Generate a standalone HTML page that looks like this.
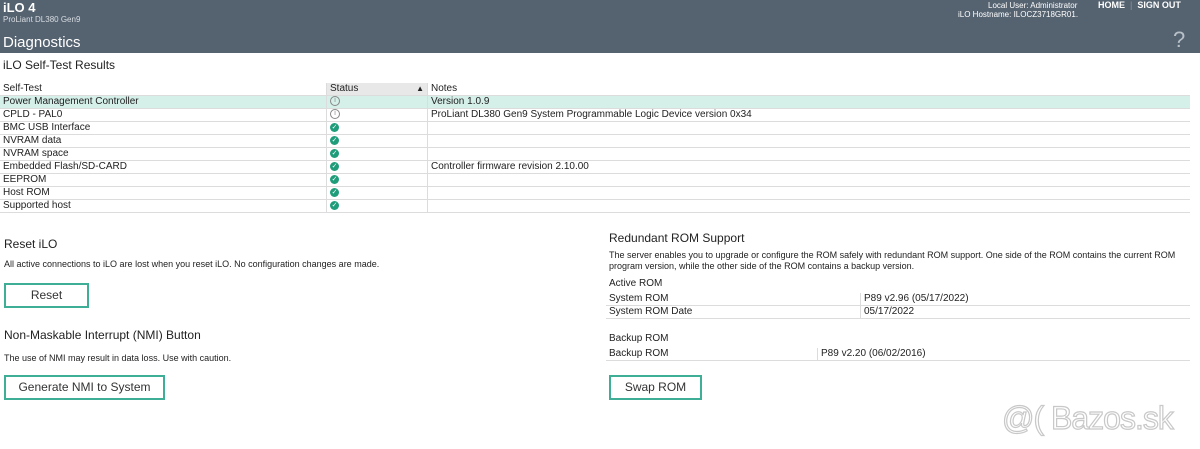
<!DOCTYPE html>
<html><head><style>
body{margin:0;width:1200px;height:449px;background:#fff;font-family:"Liberation Sans",Arial,sans-serif;color:#222;position:relative;overflow:hidden}
.a{position:absolute;white-space:nowrap}
.hdr{position:absolute;left:0;top:0;width:1200px;height:53px;background:#556270}
.t{font-size:10px}
table{border-collapse:collapse;position:absolute;font-size:10px}
td{padding:0 3px;height:12px;border-bottom:1px solid #dcdcdc;line-height:12px}
table td+td{border-left:1px solid #dcdcdc}
.btn{position:absolute;border:2px solid #3fae97;font-size:12px;text-align:center;color:#333;box-sizing:border-box}
.ok{display:inline-block;width:9px;height:9px;border-radius:50%;background:#1f9d7a;color:#fff;font-size:7px;line-height:9px;text-align:center;vertical-align:middle}
.in{display:inline-block;width:8px;height:8px;border-radius:50%;border:1px solid #888;color:#888;font-size:7px;line-height:8px;text-align:center;vertical-align:middle}
</style></head><body>
<div class="hdr"></div>
<div class="a" style="left:3px;top:0;color:#fff;font-weight:bold;font-size:13px">iLO 4</div>
<div class="a" style="left:3px;top:15px;color:#d8dde2;font-size:8px">ProLiant DL380 Gen9</div>
<div class="a" style="left:3px;top:34px;color:#fff;font-size:15px">Diagnostics</div>
<div class="a" style="left:988px;top:1px;color:#fff;font-size:8px">Local User: Administrator</div>
<div class="a" style="left:958px;top:10px;color:#fff;font-size:8px">iLO Hostname: ILOCZ3718GR01.</div>
<div class="a" style="left:1098px;top:0;color:#fff;font-size:9px;font-weight:bold">HOME &nbsp;<span style="color:#8a96a2;font-weight:normal">|</span>&nbsp; SIGN OUT</div>
<div class="a" style="left:1173px;top:27px;color:#b8c0c8;font-size:22px">?</div>
<div class="a" style="left:3px;top:58px;font-size:12px">iLO Self-Test Results</div>
<table style="left:0;top:83px;width:1190px">
<tr><td style="width:320px">Self-Test</td><td style="width:94px;background:#e8e8e8">Status<span style="float:right;font-size:8px">▲</span></td><td>Notes</td></tr>
<tr style="background:#d5efe9"><td>Power Management Controller</td><td><span class="in">i</span></td><td>Version 1.0.9</td></tr>
<tr><td>CPLD - PAL0</td><td><span class="in">i</span></td><td>ProLiant DL380 Gen9 System Programmable Logic Device version 0x34</td></tr>
<tr><td>BMC USB Interface</td><td><span class="ok">✓</span></td><td></td></tr>
<tr><td>NVRAM data</td><td><span class="ok">✓</span></td><td></td></tr>
<tr><td>NVRAM space</td><td><span class="ok">✓</span></td><td></td></tr>
<tr><td>Embedded Flash/SD-CARD</td><td><span class="ok">✓</span></td><td>Controller firmware revision 2.10.00</td></tr>
<tr><td>EEPROM</td><td><span class="ok">✓</span></td><td></td></tr>
<tr><td>Host ROM</td><td><span class="ok">✓</span></td><td></td></tr>
<tr><td>Supported host</td><td><span class="ok">✓</span></td><td></td></tr>
</table>
<div class="a" style="left:4px;top:237px;font-size:12px">Reset iLO</div>
<div class="a t" style="left:4px;top:259px;font-size:9px">All active connections to iLO are lost when you reset iLO. No configuration changes are made.</div>
<div class="btn" style="left:4px;top:283px;width:85px;height:25px;line-height:21px">Reset</div>
<div class="a" style="left:4px;top:328px;font-size:12px">Non-Maskable Interrupt (NMI) Button</div>
<div class="a t" style="left:4px;top:353px;font-size:9px">The use of NMI may result in data loss. Use with caution.</div>
<div class="btn" style="left:4px;top:375px;width:161px;height:25px;line-height:21px">Generate NMI to System</div>
<div class="a" style="left:609px;top:231px;font-size:12px">Redundant ROM Support</div>
<div class="a" style="left:609px;top:250px;font-size:9px;line-height:11px">The server enables you to upgrade or configure the ROM safely with redundant ROM support. One side of the ROM contains the current ROM<br>program version, while the other side of the ROM contains a backup version.</div>
<div class="a t" style="left:609px;top:278px">Active ROM</div>
<table style="left:606px;top:293px;width:584px"><tr><td style="width:248px">System ROM</td><td>P89 v2.96 (05/17/2022)</td></tr><tr><td>System ROM Date</td><td>05/17/2022</td></tr></table>
<div class="a t" style="left:609px;top:333px">Backup ROM</div>
<table style="left:606px;top:348px;width:584px"><tr><td style="width:205px">Backup ROM</td><td>P89 v2.20 (06/02/2016)</td></tr></table>
<div class="btn" style="left:609px;top:375px;width:93px;height:25px;line-height:21px">Swap ROM</div>
<div class="a" style="left:1002px;top:400px;font-size:32px;letter-spacing:-1px;color:#fff;-webkit-text-stroke:1.2px #c8c8c8">@( Bazos.sk</div>
</body></html>
